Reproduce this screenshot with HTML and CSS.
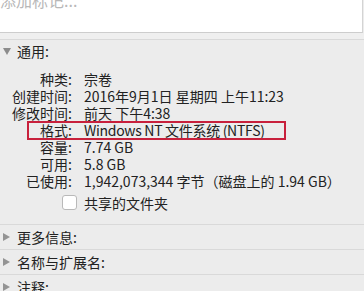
FILE: index.html
```html
<!DOCTYPE html>
<html lang="zh-CN">
<head>
    <meta charset="UTF-8">
    <meta name="viewport" content="width=device-width, initial-scale=1.0">
    <title>简介</title>
    <link rel="stylesheet" href="styles.css">
</head>
<body>
    <div class="panel">
        <div class="tag-field">
            <span class="placeholder">添加标记...</span>
        </div>
        <div class="tag-gap"></div>

        <div class="section open">
            <div class="section-head">
                <span class="arrow down"></span>
                <span>通用:</span>
            </div>
            <div class="info">
                <div class="label">种类:</div><div class="value">宗卷</div>
                <div class="label">创建时间:</div><div class="value">2016年9月1日 星期四 上午11:23</div>
                <div class="label">修改时间:</div><div class="value">前天 下午4:38</div>
                <div class="label">格式:</div><div class="value tight">Windows NT 文件系统 (NTFS)</div>
                <div class="label">容量:</div><div class="value">7.74 GB</div>
                <div class="label">可用:</div><div class="value">5.8 GB</div>
                <div class="label">已使用:</div><div class="value">1,942,073,344 字节（磁盘上的 1.94 GB）</div>
            </div>
            <label class="check">
                <span class="box"></span>
                <span>共享的文件夹</span>
            </label>
            <div class="mark"></div>
        </div>

        <div class="section">
            <div class="section-head">
                <span class="arrow"></span>
                <span>更多信息:</span>
            </div>
        </div>
        <div class="section">
            <div class="section-head">
                <span class="arrow"></span>
                <span>名称与扩展名:</span>
            </div>
        </div>
        <div class="section">
            <div class="section-head">
                <span class="arrow"></span>
                <span>注释:</span>
            </div>
        </div>
    </div>
</body>
</html>
```

FILE: styles.css
```css
body {
    margin: 0;
    background-color: #ececec;
    font-family: "Noto Sans CJK SC", "Noto Sans", sans-serif;
    font-size: 14px;
    color: #222;
    overflow: hidden;
}
.panel {
    width: 364px;
    height: 291px;
    overflow: hidden;
}
.tag-field {
    height: 32px;
    width: 362px;
    background: #fff;
    border-bottom: 1px solid #cdcdcd;
    border-right: 1px solid #d4d4d4;
    overflow: hidden;
}
.placeholder {
    display: block;
    margin-top: -10px;
    line-height: 20px;
    font-size: 16px;
    color: #b8b8b8;
}
.tag-gap {
    height: 6px;
    background: #efefef;
}
.section {
    border-top: 1px solid #d9d9d9;
    position: relative;
}
.section-head {
    display: flex;
    align-items: center;
    gap: 6px;
    height: 24px;
    padding-left: 3px;
}
.section.open .section-head {
    height: 22px;
}
.arrow {
    width: 0;
    height: 0;
    border-top: 4px solid transparent;
    border-bottom: 4px solid transparent;
    border-left: 7px solid #949494;
    margin-right: 1px;
}
.arrow.down {
    border-left: 4px solid transparent;
    border-right: 4px solid transparent;
    border-top: 7px solid #8c8c8c;
    border-bottom: 0;
    margin-right: 0;
}
.info {
    display: grid;
    grid-template-columns: 72px 1fr;
    column-gap: 12px;
    grid-auto-rows: 17px;
    line-height: 17px;
    margin-top: 9px;
}
.label {
    text-align: right;
    white-space: nowrap;
}
.value {
    white-space: nowrap;
}
.value.tight {
    letter-spacing: -0.3px;
}
.check {
    display: flex;
    align-items: center;
    gap: 7px;
    height: 17px;
    margin: 4px 0 0 62px;
    padding-bottom: 13px;
}
.box {
    width: 13px;
    height: 13px;
    background: #fff;
    border: 1px solid #b9b9b9;
    border-radius: 3px;
}
.mark {
    position: absolute;
    left: 27px;
    top: 81px;
    width: 255px;
    height: 15px;
    border: 2px solid #c8203c;
}
```
